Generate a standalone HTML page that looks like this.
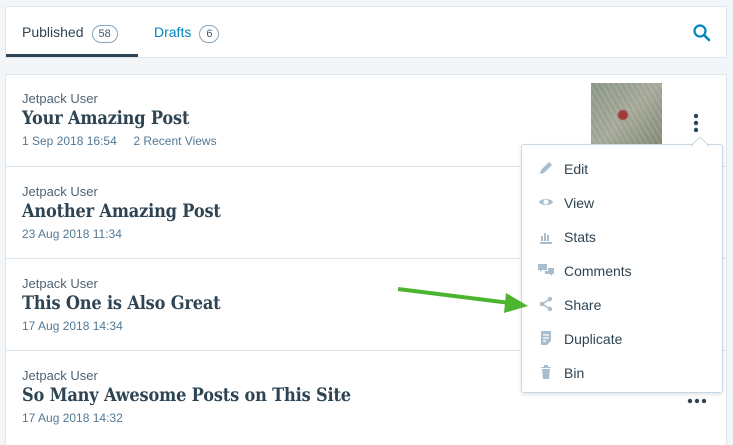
<!DOCTYPE html>
<html><head><style>
body{margin:0;width:733px;height:434px;background:#f3f6f8;font-family:"Liberation Sans",sans-serif;position:relative;overflow:hidden;color:#2e4453}
.box{position:absolute;background:#fff;box-shadow:0 0 0 1px #dfe7ed}
.t{position:absolute;font-size:14px;top:17px}
.cnt{display:inline-block;border:1px solid #87a6bc;border-radius:10px;font-size:11px;padding:1px 6px;margin-left:8px;color:#3d596d;line-height:14px}
.row{position:absolute;left:6px;width:720px;border-top:1px solid #dfe7ed}
.au{position:absolute;left:16px;font-size:13px;color:#4f6373}
.ti{position:absolute;left:16px;font-family:"DejaVu Serif","Liberation Serif",serif;font-weight:bold;font-size:18.5px;color:#2e4453;letter-spacing:-0.2px;transform:scaleX(0.875);transform-origin:0 0;white-space:nowrap}
.dt{position:absolute;left:16px;font-size:12px;color:#537994}
.menu{position:absolute;left:521px;top:144px;width:200px;height:247px;background:#fff;border:1px solid #c8d7e1;border-radius:3px;box-shadow:0 2px 4px rgba(0,0,0,.1)}
.mi{position:absolute;left:42px;font-size:14px;color:#2e4453}
.ic{position:absolute;left:16px;width:16px;height:16px}
</style></head><body>
<div class="box" style="left:6px;top:7px;width:720px;height:50px">
<div class="t" style="left:16px">Published<span class="cnt">58</span></div>
<div class="t" style="left:148px;color:#0087be">Drafts<span class="cnt">6</span></div>
<div style="position:absolute;left:0;top:47px;width:132px;height:3px;background:#2e4453"></div>
<svg style="position:absolute;left:686px;top:16px" width="20" height="20" viewBox="0 0 20 20"><circle cx="8" cy="8" r="5.5" fill="none" stroke="#0087be" stroke-width="2.2"/><path d="M12 12l5 5" stroke="#0087be" stroke-width="2.6" stroke-linecap="round"/></svg>
</div>
<div class="box" style="left:6px;top:75px;width:720px;height:370px"></div>
<div class="row" style="top:75px;border:none">
<div class="au" style="top:16px">Jetpack User</div><div class="ti" style="top:33px">Your Amazing Post</div><div class="dt" style="top:59px">1 Sep 2018 16:54 &nbsp;&nbsp;&nbsp; 2 Recent Views</div>
<div style="position:absolute;left:585px;top:8px;width:71px;height:64px;background:radial-gradient(circle at 45% 50%,#a03838 0 4px,transparent 6px),repeating-linear-gradient(60deg,rgba(255,255,255,.12) 0 2px,transparent 2px 5px),linear-gradient(135deg,#8a9583,#a3a797 50%,#7f8773)"></div>
<svg style="position:absolute;left:686px;top:38px" width="8" height="22"><circle cx="4" cy="3" r="2.2" fill="#2e4453"/><circle cx="4" cy="10" r="2.2" fill="#2e4453"/><circle cx="4" cy="17" r="2.2" fill="#2e4453"/></svg>
</div>
<div class="row" style="top:166px"><div class="au" style="top:17px">Jetpack User</div><div class="ti" style="top:34px">Another Amazing Post</div><div class="dt" style="top:60px">23 Aug 2018 11:34</div></div>
<div class="row" style="top:258px"><div class="au" style="top:17px">Jetpack User</div><div class="ti" style="top:34px">This One is Also Great</div><div class="dt" style="top:60px">17 Aug 2018 14:34</div></div>
<div class="row" style="top:350px"><div class="au" style="top:17px">Jetpack User</div><div class="ti" style="top:34px">So Many Awesome Posts on This Site</div><div class="dt" style="top:60px">17 Aug 2018 14:32</div>
<svg style="position:absolute;left:681px;top:47px" width="22" height="6"><circle cx="3" cy="3" r="2.2" fill="#2e4453"/><circle cx="10" cy="3" r="2.2" fill="#2e4453"/><circle cx="17" cy="3" r="2.2" fill="#2e4453"/></svg></div>
<div class="menu">
<svg style="position:absolute;left:169px;top:-8px" width="18" height="9"><path d="M0 9L9 0L18 9" fill="#fff" stroke="#c8d7e1"/></svg>
<svg class="ic" style="top:15px" viewBox="0 0 16 16"><path d="M2 14l1-4 8-8 3 3-8 8z" fill="#a8bece"/></svg><div class="mi" style="top:16px">Edit</div>
<svg class="ic" style="top:49px" viewBox="0 0 16 16"><path d="M1 8c2-4 12-4 14 0-2 4-12 4-14 0z" fill="#a8bece"/><circle cx="8" cy="8" r="2.5" fill="#fff"/></svg><div class="mi" style="top:50px">View</div>
<svg class="ic" style="top:83px" viewBox="0 0 16 16"><path d="M2 15h12M4 8v5M7 5v8M10 7v6" stroke="#a8bece" stroke-width="2"/></svg><div class="mi" style="top:84px">Stats</div>
<svg class="ic" style="top:117px" viewBox="0 0 16 16"><path d="M0 2h9v6H4l-2 2V8H0z M10 6h6v6h-2v2l-2-2H7V9h3z" fill="#a8bece"/></svg><div class="mi" style="top:118px">Comments</div>
<svg class="ic" style="top:151px" viewBox="0 0 16 16"><path d="M12 3L4 8l8 5" stroke="#a8bece" stroke-width="1.5" fill="none"/><circle cx="12" cy="3" r="2.2" fill="#a8bece"/><circle cx="4" cy="8" r="2.2" fill="#a8bece"/><circle cx="12" cy="13" r="2.2" fill="#a8bece"/></svg><div class="mi" style="top:152px">Share</div>
<svg class="ic" style="top:185px" viewBox="0 0 16 16"><path d="M3 1h10v10l-4 4H3z" fill="#a8bece"/><path d="M5 5h6M5 8h6M5 11h3" stroke="#fff" stroke-width="1.2"/></svg><div class="mi" style="top:186px">Duplicate</div>
<svg class="ic" style="top:219px" viewBox="0 0 16 16"><path d="M3 3h10v1H3zM6 1h4v2H6zM4 5h8l-1 10H5z" fill="#a8bece"/></svg><div class="mi" style="top:220px">Bin</div>
</div>
<svg style="position:absolute;left:0;top:0" width="733" height="434"><path d="M398 289L510 303" stroke="#4bb52f" stroke-width="4"/><path d="M528 306L506 293L504 313z" fill="#4bb52f"/></svg>
</body></html>
